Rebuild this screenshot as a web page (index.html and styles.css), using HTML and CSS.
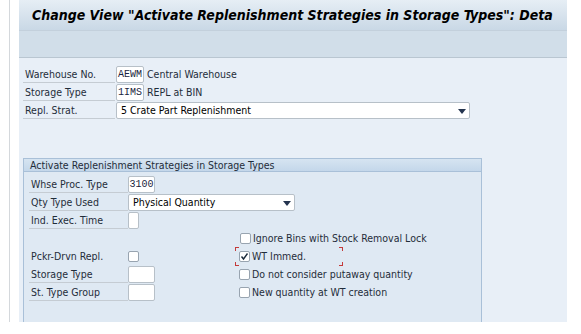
FILE: index.html
```html
<!DOCTYPE html>
<html>
<head>
<meta charset="utf-8">
<link rel="stylesheet" href="styles.css">
</head>
<body>
<div class="frame">
  <div class="panel">
    <div class="titlebar"><h1 class="title">Change View "Activate Replenishment Strategies in Storage Types": Deta</h1></div>
    <div class="toolbar"></div>
    <div class="content">
      <div class="row">
        <span class="label">Warehouse No.</span>
        <span class="field mono f4">AEWM</span>
        <span class="desc">Central Warehouse</span>
      </div>
      <div class="row">
        <span class="label">Storage Type</span>
        <span class="field mono f4">1IMS</span>
        <span class="desc">REPL at BIN</span>
      </div>
      <div class="row">
        <span class="label">Repl. Strat.</span>
        <span class="field dropdown strat">5 Crate Part Replenishment<span class="arrow"></span></span>
      </div>

      <div class="group">
        <div class="group-head">Activate Replenishment Strategies in Storage Types</div>
        <div class="group-body">
          <div class="row">
            <span class="label glabel">Whse Proc. Type</span>
            <span class="field mono f4b">3100</span>
          </div>
          <div class="row">
            <span class="label glabel">Qty Type Used</span>
            <span class="field dropdown qty">Physical Quantity<span class="arrow"></span></span>
          </div>
          <div class="row">
            <span class="label glabel">Ind. Exec. Time</span>
            <span class="field f1"></span>
          </div>
          <div class="row">
            <span class="glabel spacer"></span>
            <span class="check-wrap"><span class="cb"></span>Ignore Bins with Stock Removal Lock</span>
          </div>
          <div class="row">
            <span class="glabel plain">Pckr-Drvn Repl.</span>
            <span class="cbcell"><span class="cb"></span></span>
            <span class="check-wrap focus"><span class="cb checked"><svg width="9" height="9" viewBox="0 0 9 9"><path d="M1.5 4.5 L3.5 7 L7.5 1.5" fill="none" stroke="#1a2a3a" stroke-width="1.4"/></svg></span>WT Immed.<span class="focusbox"><i class="c tl"></i><i class="c tr"></i><i class="c bl"></i><i class="c br"></i></span></span>
          </div>
          <div class="row">
            <span class="label glabel">Storage Type</span>
            <span class="field f4b"></span>
            <span class="check-wrap gap"><span class="cb"></span>Do not consider putaway quantity</span>
          </div>
          <div class="row">
            <span class="label glabel">St. Type Group</span>
            <span class="field f4b"></span>
            <span class="check-wrap gap"><span class="cb"></span>New quantity at WT creation</span>
          </div>
        </div>
      </div>
    </div>
  </div>
</div>
</body>
</html>
```

FILE: styles.css
```css
* { box-sizing: border-box; }
html, body { margin: 0; padding: 0; background: #ffffff; }
body {
  font-family: "DejaVu Sans Condensed", "DejaVu Sans", sans-serif;
  font-size: 10.5px;
  color: #1f2d3a;
  width: 581px;
  height: 334px;
  overflow: hidden;
}
.frame {
  margin-left: 9px;
  border-left: 1px solid #d4d8dc;
  padding-left: 9px;
  height: 322px;
}
.panel {
  width: 548px;
  height: 322px;
  display: flex;
  flex-direction: column;
  background: #e8eff7;
  overflow: hidden;
}
.titlebar {
  height: 31px;
  background: linear-gradient(#e6eef5, #c9d8e6);
  border-bottom: 1px solid #c3d0dc;
  padding-left: 13px;
  display: flex;
  align-items: center;
  overflow: hidden;
}
.title {
  margin: 0;
  font-family: "DejaVu Sans Condensed", "DejaVu Sans", sans-serif;
  font-size: 14px;
  font-weight: bold;
  font-style: italic;
  color: #000;
  white-space: nowrap;
}
.toolbar {
  height: 27px;
  background: #d1dee9;
  border-bottom: 1px solid #b9c6d1;
}
.content {
  flex: 1;
  padding: 7px 0 0 4px;
  display: flex;
  flex-direction: column;
}
.row {
  display: flex;
  align-items: center;
  height: 18px;
}
.label {
  width: 92px;
  height: 17px;
  line-height: 17px;
  padding-left: 2px;
  border-bottom: 1px solid #c5ccd3;
  margin-right: 1px;
}
.field {
  height: 17px;
  background: #fff;
  border: 1px solid #b7c0c8;
  border-radius: 2px;
  line-height: 15px;
  padding: 0 3px;
  color: #000;
}
.mono {
  font-family: "Liberation Mono", "DejaVu Sans Mono", monospace;
  font-size: 10px;
  color: #1a2540;
}
.f4 { width: 28px; padding: 0; text-align: center; }
.f4b { width: 27px; padding: 0; text-align: center; }
.f1 { width: 11px; height: 17px; }
.desc { margin-left: 3px; }
.dropdown {
  position: relative;
  padding-left: 4px;
}
.strat { width: 354px; }
.qty { width: 167px; }
.arrow {
  position: absolute;
  right: 3px;
  top: 6px;
  width: 0; height: 0;
  border-left: 4px solid transparent;
  border-right: 4px solid transparent;
  border-top: 5px solid #24344f;
}
.group {
  margin-top: 39px;
  width: 459px;
  flex: 1;
  border: 1px solid #a9c0d8;
  border-bottom: none;
  background: #dfe9f3;
}
.group-head {
  height: 13px;
  line-height: 12px;
  background: linear-gradient(#d6e4f1, #c4d7ea);
  border-bottom: 1px solid #a9c0d8;
  padding-left: 6px;
}
.group-body { padding: 3px 0 0 5px; }
.glabel { width: 99px; margin-right: 0; }
.plain { height: 17px; line-height: 17px; padding-left: 2px; }
.spacer { height: 17px; }
.cbcell { width: 111px; display: flex; align-items: center; }
.cb {
  width: 11px; height: 11px;
  background: #fff;
  border: 1px solid #98a4b0;
  border-radius: 2px;
  margin-right: 2px;
  display: inline-flex;
  align-items: center;
  justify-content: center;
}
.check-wrap {
  display: flex;
  align-items: center;
  margin-left: 112px;
  position: relative;
}
.focus { margin-left: 0; }
.gap { margin-left: 84px; }
.focusbox {
  position: absolute;
  left: -4px;
  top: 50%;
  margin-top: -9px;
  width: 108px;
  height: 19px;
}
.c { position: absolute; width: 4px; height: 4px; border-color: #c43a3a; border-style: solid; border-width: 0; }
.tl { left: 0; top: 0; border-left-width: 1px; border-top-width: 1px; }
.tr { right: 0; top: 0; border-right-width: 1px; border-top-width: 1px; }
.bl { left: 0; bottom: 0; border-left-width: 1px; border-bottom-width: 1px; }
.br { right: 0; bottom: 0; border-right-width: 1px; border-bottom-width: 1px; }
```
